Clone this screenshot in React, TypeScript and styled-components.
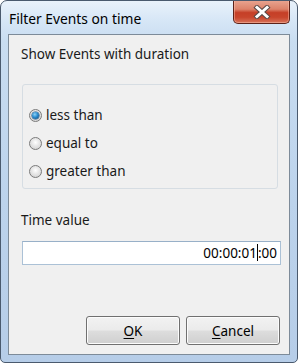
import React, { useState } from "react";
import styled, { createGlobalStyle } from "styled-components";

const Global = createGlobalStyle`
  html, body {
    margin: 0;
    padding: 0;
    background: #ffffff;
  }
  body {
    font-family: "Noto Sans", "Open Sans", sans-serif;
  }
`;

const Window = styled.div`
  width: 298px;
  height: 363px;
  box-sizing: border-box;
  display: flex;
  flex-direction: column;
  border: 1px solid #4a5a6e;
  border-radius: 7px 7px 5px 5px;
  background: linear-gradient(
    180deg,
    #e9f2fb 0px,
    #d6e6f6 20px,
    #c9ddf1 40px,
    #bcd3ec 200px,
    #b6cde8 100%
  );
  overflow: hidden;
`;

const TitleBar = styled.div`
  height: 33px;
  display: flex;
  align-items: flex-start;
  justify-content: space-between;
  padding-left: 8px;
  padding-right: 7px;
`;

const Title = styled.span`
  margin-top: 8px;
  font-size: 13.8px;
  color: #000000;
`;

const CloseButton = styled.div`
  margin-top: -1px;
  width: 57px;
  height: 24px;
  box-sizing: border-box;
  border: 1px solid #5c2219;
  border-top: none;
  border-radius: 0 0 5px 5px;
  background: linear-gradient(
    180deg,
    #e9a692 0%,
    #dc826a 40%,
    #c53f27 55%,
    #c8452c 75%,
    #d8735a 100%
  );
  box-shadow: inset 0 0 0 1px rgba(255, 200, 180, 0.45);
  display: flex;
  align-items: center;
  justify-content: center;
`;

const Client = styled.div`
  flex: 1;
  margin: 0 7px 7px 7px;
  border: 1px solid #7d8b99;
  background: #f0f0f0;
  display: flex;
  flex-direction: column;
  padding: 0 8px 0 12px;
  color: #1a1a1a;
  font-size: 13.5px;
`;

const Label = styled.div<{ $top: number }>`
  margin-top: ${(p) => p.$top}px;
  line-height: 18px;
`;

const Group = styled.div`
  margin-top: 21px;
  margin-left: 1px;
  width: 256px;
  height: 105px;
  box-sizing: border-box;
  border: 1px solid #d6dde3;
  border-radius: 3px;
  padding: 21px 0 0 6px;
  display: flex;
  flex-direction: column;
  gap: 10px;
`;

const RadioRow = styled.label`
  display: flex;
  align-items: center;
  height: 18px;
  gap: 4px;
`;

const RadioCircle = styled.span<{ $checked: boolean }>`
  width: 13px;
  height: 13px;
  box-sizing: border-box;
  border-radius: 50%;
  border: 1px solid #7b7b7b;
  background: radial-gradient(circle at 50% 40%, #ffffff 0%, #e6e6e6 45%, #cdcdcd 100%);
  display: flex;
  align-items: center;
  justify-content: center;

  &::after {
    content: "";
    display: ${(p) => (p.$checked ? "block" : "none")};
    width: 7px;
    height: 7px;
    border-radius: 50%;
    background: radial-gradient(circle at 40% 35%, #8fd3f5 0%, #2a8cd0 45%, #0a3f6e 100%);
    box-shadow: 0 0 0 0.5px #1d4f7c;
  }
`;

const TimeInput = styled.div`
  margin-top: 12px;
  margin-left: 1px;
  width: 259px;
  height: 24px;
  box-sizing: border-box;
  border: 1px solid #abc1d6;
  border-top-color: #98b0c8;
  background: #ffffff;
  display: flex;
  align-items: center;
  justify-content: flex-end;
  padding-right: 3px;
  font-size: 13.5px;
  color: #000000;
`;

const Caret = styled.span`
  display: inline-block;
  width: 0;
  height: 17px;
  border-left: 1px solid #000000;
  margin-top: -1px;
`;

const Buttons = styled.div`
  margin-top: auto;
  margin-bottom: 9px;
  display: flex;
  justify-content: flex-end;
  gap: 6px;
  padding-right: 1px;
`;

const Button = styled.button`
  width: 94px;
  height: 29px;
  box-sizing: border-box;
  border: 1px solid #707070;
  border-radius: 3px;
  background: linear-gradient(180deg, #f2f2f2 0%, #ebebeb 48%, #dddddd 52%, #cfcfcf 100%);
  box-shadow: inset 0 0 0 1px #fcfcfc;
  font-family: "Noto Sans", "Open Sans", sans-serif;
  font-size: 13.5px;
  color: #000000;
  padding: 0;

  u {
    text-underline-offset: 2px;
  }
`;

const options = ["less than", "equal to", "greater than"];

const App = () => {
  const [choice, setChoice] = useState(0);

  return (
    <>
      <Global />
      <Window>
        <TitleBar>
          <Title>Filter Events on time</Title>
          <CloseButton>
            <svg width="20" height="14" viewBox="0 0 20 14">
              <path
                d="M5 2.5 L15 11.5 M15 2.5 L5 11.5"
                stroke="#5a4a48"
                strokeWidth="5"
                strokeLinecap="square"
              />
              <path
                d="M5 2.5 L15 11.5 M15 2.5 L5 11.5"
                stroke="#ffffff"
                strokeWidth="3"
                strokeLinecap="square"
              />
            </svg>
          </CloseButton>
        </TitleBar>
        <Client>
          <Label $top={10}>Show Events with duration</Label>
          <Group>
            {options.map((o, i) => (
              <RadioRow key={o} onClick={() => setChoice(i)}>
                <RadioCircle $checked={choice === i} />
                {o}
              </RadioRow>
            ))}
          </Group>
          <Label $top={22}>Time value</Label>
          <TimeInput>
            00:00:01<Caret />:00
          </TimeInput>
          <Buttons>
            <Button>
              <u>O</u>K
            </Button>
            <Button>
              <u>C</u>ancel
            </Button>
          </Buttons>
        </Client>
      </Window>
    </>
  );
};

export default App;
